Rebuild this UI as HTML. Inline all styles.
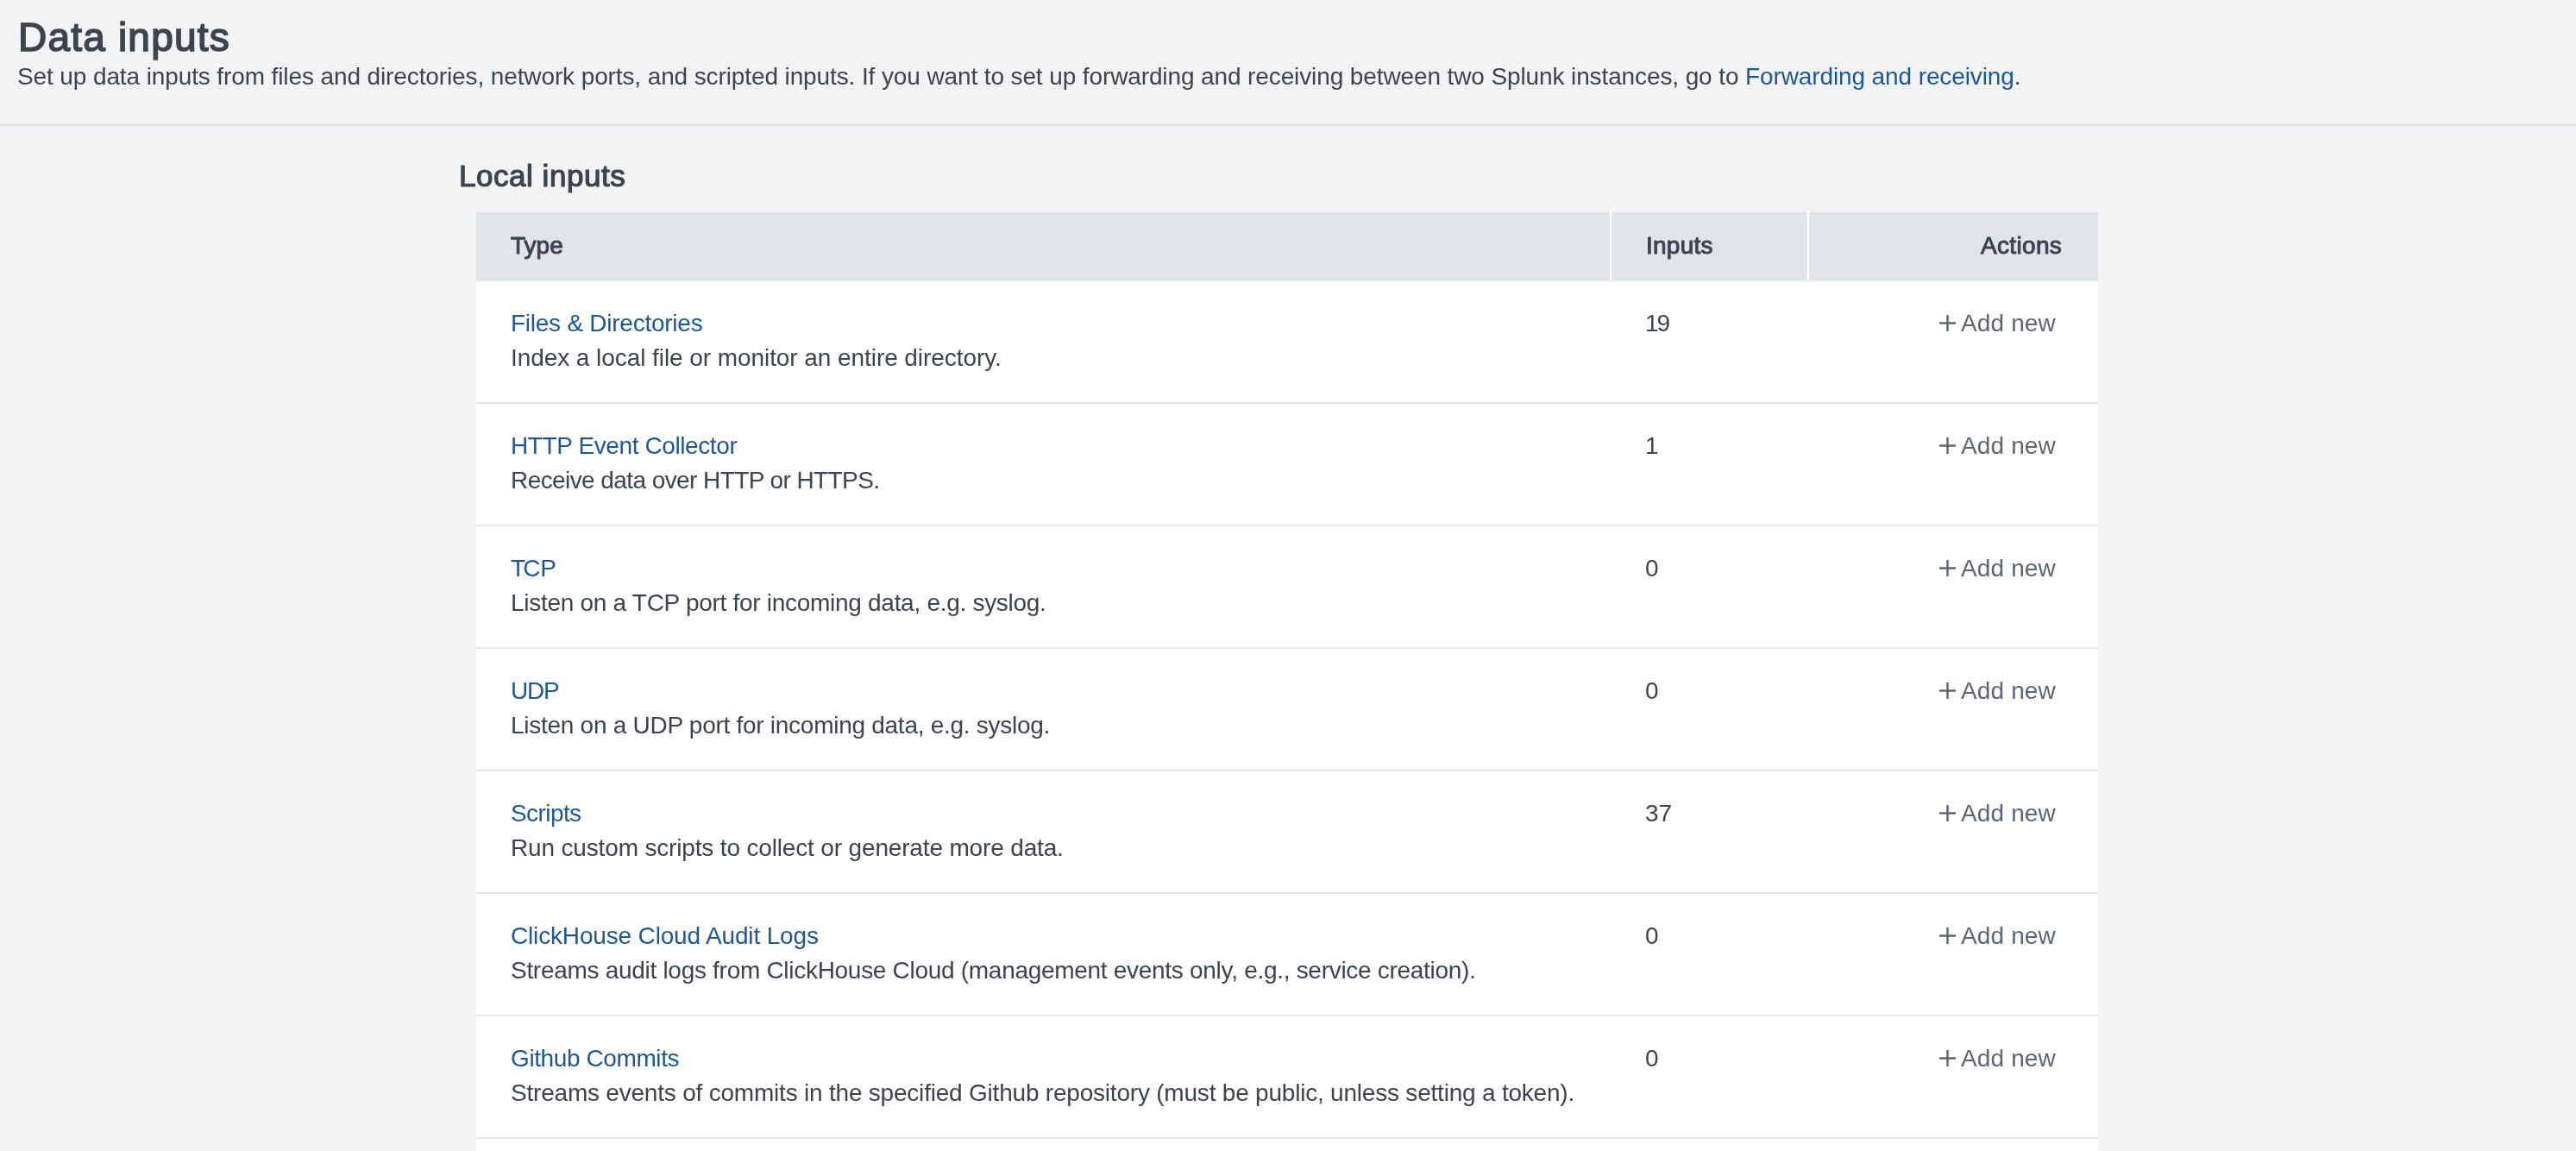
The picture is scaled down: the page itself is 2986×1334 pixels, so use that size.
<!DOCTYPE html>
<html>
<head>
<meta charset="utf-8">
<title>Data inputs</title>
<style>
html, body { margin: 0; padding: 0; }
body {
  width: 2986px; height: 1334px; overflow: hidden; position: relative;
  background: #f2f3f5; color: #3c444d;
  font-family: "Liberation Sans", sans-serif;
}
.abs { position: absolute; white-space: nowrap; }
.table, h1, h2, .sub { will-change: transform; }
h1 { margin: 0; font-size: 46px; line-height: 56px; font-weight: normal; -webkit-text-stroke: 1.6px #3c444d; left: 21px; top: 15px; letter-spacing: 1.2px; }
.sub { font-size: 28px; line-height: 40px; left: 20px; top: 69px; letter-spacing: -0.113px; }
a { color: #1f5791; text-decoration: none; }
.hline { left: 0; top: 144px; width: 2986px; height: 2px; background: #e1e5ea; }
h2 { margin: 0; font-size: 35px; line-height: 44px; font-weight: normal; -webkit-text-stroke: 1.2px #3c444d; left: 532px; top: 181.5px; letter-spacing: 0.536px; }
.table { left: 552px; top: 246px; width: 1880px; height: 1100px; background: #fff; }
.thead { left: 0; top: 0; width: 1880px; height: 80px; background: #e1e5ea; }
.th { font-size: 28px; line-height: 40px; font-weight: normal; -webkit-text-stroke: 1.0px #3c444d; top: 19px; }
.div1 { left: 1314px; top: 0; width: 2px; height: 80px; background: #fff; }
.div2 { left: 1543px; top: 0; width: 2px; height: 80px; background: #fff; }
.row { left: 0; width: 1880px; height: 140px; border-bottom: 2px solid #e1e6eb; }
.row .l { font-size: 28px; line-height: 40px; left: 40px; top: 28.5px; }
.row .d { font-size: 28px; line-height: 40px; left: 40px; top: 68.5px; }
.row .n { font-size: 28px; line-height: 40px; left: 1355px; top: 28.5px; }
.row .add { font-size: 28px; line-height: 40px; left: 1721px; top: 28.5px; color: #5c6773; letter-spacing: 0.133px; }
.row svg { position: absolute; left: 1695.5px; top: 39px; }
</style>
</head>
<body>
<h1 class="abs">Data inputs</h1>
<div class="abs sub">Set up data inputs from files and directories, network ports, and scripted inputs. If you want to set up forwarding and receiving between two Splunk instances, go to <a href="#">Forwarding and receiving</a>.</div>
<div class="abs hline"></div>
<h2 class="abs">Local inputs</h2>
<div class="abs table">
  <div class="abs thead">
    <div class="abs th" style="left:40px;letter-spacing:0px">Type</div>
    <div class="abs div1"></div>
    <div class="abs th" style="left:1356px;letter-spacing:0.24px">Inputs</div>
    <div class="abs div2"></div>
    <div class="abs th" style="left:1744px;letter-spacing:0.333px">Actions</div>
  </div>
  <div class="abs row" style="top:80px">
    <div class="abs l" style="letter-spacing:-0.25px"><a href="#">Files &amp; Directories</a></div>
    <div class="abs d" style="letter-spacing:-0.069px">Index a local file or monitor an entire directory.</div>
    <div class="abs n" style="letter-spacing:-2px">19</div>
    <svg width="19" height="19" viewBox="0 0 20 20"><path d="M10 0V20M0 10H20" stroke="#5c6773" stroke-width="2.6" fill="none"/></svg>
    <div class="abs add">Add new</div>
  </div>
  <div class="abs row" style="top:222px">
    <div class="abs l" style="letter-spacing:-0.395px"><a href="#">HTTP Event Collector</a></div>
    <div class="abs d" style="letter-spacing:-0.581px">Receive data over HTTP or HTTPS.</div>
    <div class="abs n" style="letter-spacing:0px">1</div>
    <svg width="19" height="19" viewBox="0 0 20 20"><path d="M10 0V20M0 10H20" stroke="#5c6773" stroke-width="2.6" fill="none"/></svg>
    <div class="abs add">Add new</div>
  </div>
  <div class="abs row" style="top:364px">
    <div class="abs l" style="letter-spacing:0px"><a href="#"><span style="letter-spacing:-2.8px">T</span><span style="letter-spacing:-0.4px">C</span>P</a></div>
    <div class="abs d" style="letter-spacing:-0.288px">Listen on a TCP port for incoming data, e.g. syslog.</div>
    <div class="abs n" style="letter-spacing:0px">0</div>
    <svg width="19" height="19" viewBox="0 0 20 20"><path d="M10 0V20M0 10H20" stroke="#5c6773" stroke-width="2.6" fill="none"/></svg>
    <div class="abs add">Add new</div>
  </div>
  <div class="abs row" style="top:506px">
    <div class="abs l" style="letter-spacing:-1.25px"><a href="#">UDP</a></div>
    <div class="abs d" style="letter-spacing:-0.271px">Listen on a UDP port for incoming data, e.g. syslog.</div>
    <div class="abs n" style="letter-spacing:0px">0</div>
    <svg width="19" height="19" viewBox="0 0 20 20"><path d="M10 0V20M0 10H20" stroke="#5c6773" stroke-width="2.6" fill="none"/></svg>
    <div class="abs add">Add new</div>
  </div>
  <div class="abs row" style="top:648px">
    <div class="abs l" style="letter-spacing:-0.583px"><a href="#">Scripts</a></div>
    <div class="abs d" style="letter-spacing:-0.159px">Run custom scripts to collect or generate more data.</div>
    <div class="abs n" style="letter-spacing:0px">37</div>
    <svg width="19" height="19" viewBox="0 0 20 20"><path d="M10 0V20M0 10H20" stroke="#5c6773" stroke-width="2.6" fill="none"/></svg>
    <div class="abs add">Add new</div>
  </div>
  <div class="abs row" style="top:790px">
    <div class="abs l" style="letter-spacing:-0.162px"><a href="#">ClickHouse Cloud Audit Logs</a></div>
    <div class="abs d" style="letter-spacing:-0.292px">Streams audit logs from ClickHouse Cloud (management events only, e.g., service creation).</div>
    <div class="abs n" style="letter-spacing:0px">0</div>
    <svg width="19" height="19" viewBox="0 0 20 20"><path d="M10 0V20M0 10H20" stroke="#5c6773" stroke-width="2.6" fill="none"/></svg>
    <div class="abs add">Add new</div>
  </div>
  <div class="abs row" style="top:932px">
    <div class="abs l" style="letter-spacing:-0.4px"><a href="#">Github Commits</a></div>
    <div class="abs d" style="letter-spacing:-0.209px">Streams events of commits in the specified Github repository (must be public, unless setting a token).</div>
    <div class="abs n" style="letter-spacing:0px">0</div>
    <svg width="19" height="19" viewBox="0 0 20 20"><path d="M10 0V20M0 10H20" stroke="#5c6773" stroke-width="2.6" fill="none"/></svg>
    <div class="abs add">Add new</div>
  </div>
</div>
</body>
</html>
